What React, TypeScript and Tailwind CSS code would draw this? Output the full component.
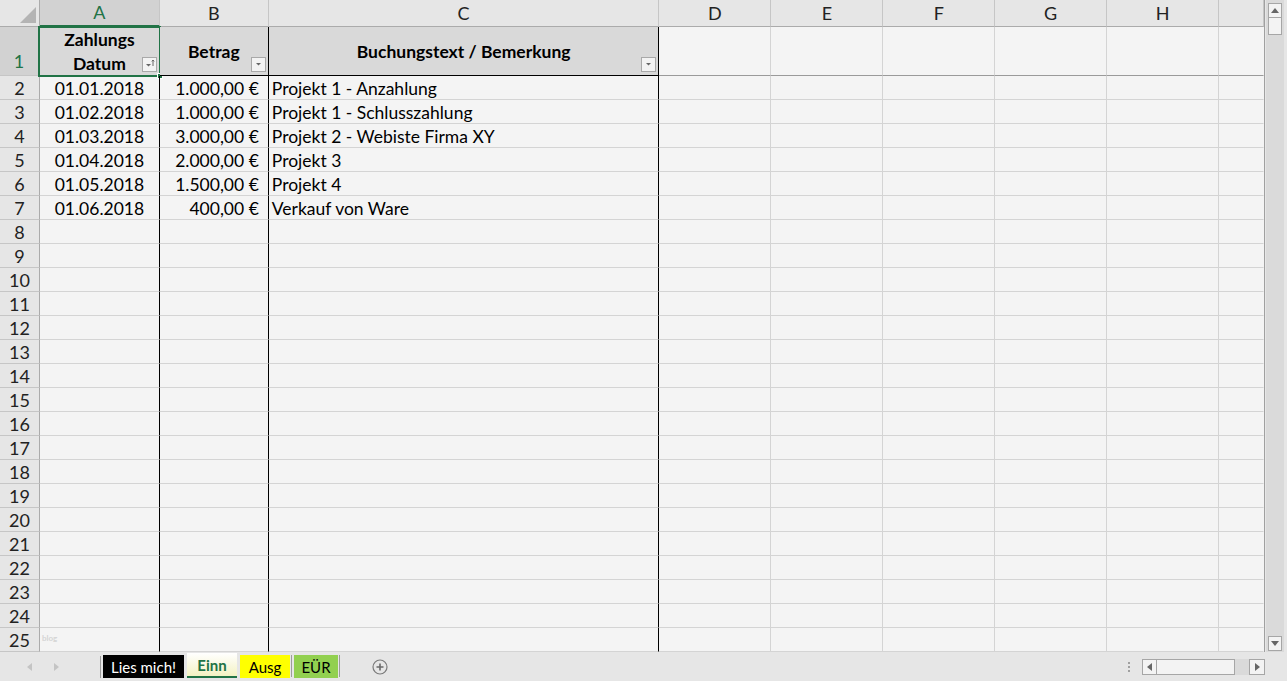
import React from "react";

const cols = [
  { key: "A", w: "w-[120px]", edge: "border-r-black" },
  { key: "B", w: "w-[109px]", edge: "border-r-black" },
  { key: "C", w: "w-[391px]", edge: "border-r-black" },
  { key: "D", w: "w-[112px]", edge: "border-r-[#d4d4d4]" },
  { key: "E", w: "w-[112px]", edge: "border-r-[#d4d4d4]" },
  { key: "F", w: "w-[112px]", edge: "border-r-[#d4d4d4]" },
  { key: "G", w: "w-[112px]", edge: "border-r-[#d4d4d4]" },
  { key: "H", w: "w-[112px]", edge: "border-r-[#d4d4d4]" },
  { key: "", w: "w-[45px]", edge: "border-r-transparent" },
];

const rows = [
  ["01.01.2018", "1.000,00 €", "Projekt 1 - Anzahlung"],
  ["01.02.2018", "1.000,00 €", "Projekt 1 - Schlusszahlung"],
  ["01.03.2018", "3.000,00 €", "Projekt 2 - Webiste Firma XY"],
  ["01.04.2018", "2.000,00 €", "Projekt 3"],
  ["01.05.2018", "1.500,00 €", "Projekt 4"],
  ["01.06.2018", "400,00 €", "Verkauf von Ware"],
];

function FilterButton({ sorted }: { sorted?: boolean }) {
  return (
    <div className="absolute right-[2px] bottom-[3px] w-[15px] h-[15px] bg-[#f3f3f3] border border-[#a9a9a9] flex items-end justify-center pb-[3px]">
      <svg width="13" height="9" viewBox="0 0 13 9">
        {sorted ? (
          <>
            <path d="M3 5h5l-2.5 2.5z" fill="#666" />
            <path d="M10 1v6M8.8 2.4L10 1l1.2 1.4" stroke="#666" strokeWidth="1" fill="none" />
          </>
        ) : (
          <path d="M4 4h5l-2.5 2.5z" fill="#666" />
        )}
      </svg>
    </div>
  );
}

function ColumnHeader() {
  return (
    <div className="flex h-[27px] bg-[#e6e6e6]">
      <div className="w-[40px] h-full border-r border-b border-[#ababab] relative">
        <svg className="absolute right-[3px] bottom-[3px]" width="16" height="16" viewBox="0 0 16 16">
          <path d="M16 0V16H0z" fill="#b4b4b4" />
        </svg>
      </div>
      {cols.map((c) => (
        <div
          key={c.key || "x"}
          className={`${c.w} h-full flex items-center justify-center text-[18px] border-b border-r ${
            c.key === "A"
              ? "bg-[#d2d2d2] text-[#217346] border-r-[#c6c6c6] border-b-[#217346] border-b-2"
              : "text-[#222] border-r-[#c6c6c6] border-b-[#ababab]"
          }`}
        >
          {c.key}
        </div>
      ))}
    </div>
  );
}

function HeaderRow() {
  return (
    <div className="flex h-[49px]">
      <div className="w-[40px] h-full bg-[#d2d2d2] border-r-2 border-r-[#217346] border-b border-b-[#c6c6c6] flex items-end justify-center text-[18px] text-[#217346]">
        1
      </div>
      <div className="w-[120px] h-full bg-[#d9d9d9] border-r border-r-black border-b border-b-black relative flex flex-col items-center justify-center pt-[2px] font-bold text-[17.5px] leading-[24px]">
        <span>Zahlungs</span>
        <span>Datum</span>
        <FilterButton sorted />
        <div className="absolute -left-[2px] -top-[1px] -right-[2px] -bottom-[2px] border-2 border-[#217346]" />
        <div className="absolute -right-[4px] -bottom-[4px] w-[6px] h-[6px] bg-[#217346] border border-white" />
      </div>
      <div className="w-[109px] h-full bg-[#d9d9d9] border-r border-r-black border-b border-b-black relative flex items-center justify-center pt-[3px] font-bold text-[17.5px]">
        Betrag
        <FilterButton />
      </div>
      <div className="w-[391px] h-full bg-[#d9d9d9] border-r border-r-black border-b border-b-black relative flex items-center justify-center pt-[3px] font-bold text-[17.5px]">
        Buchungstext / Bemerkung
        <FilterButton />
      </div>
      {cols.slice(3).map((c) => (
        <div key={c.key || "x"} className={`${c.w} h-full border-r ${c.edge} border-b border-b-[#9a9a9a]`} />
      ))}
    </div>
  );
}

function DataRow({ n, data }: { n: number; data?: string[] }) {
  return (
    <div className="flex h-[24px]">
      <div className="w-[40px] h-full bg-[#e6e6e6] border-r border-r-[#ababab] border-b border-b-[#c6c6c6] flex items-center justify-center pt-[1px] text-[18px] text-[#222]">
        {n}
      </div>
      {cols.map((c, i) => (
        <div
          key={c.key || "x"}
          className={`${c.w} h-full border-r ${c.edge} border-b border-b-[#d4d4d4] flex items-center pt-[3px] text-[17.5px] text-black whitespace-nowrap relative ${
            i === 0 ? "justify-center" : i === 1 ? "justify-end pr-[9px]" : "pl-[3px]"
          }`}
        >
          {data ? data[i] : null}
          {n === 25 && i === 0 ? (
            <span className="absolute left-[2px] top-[4px] text-[8px] font-bold text-[#d4d4d4]">blog</span>
          ) : null}
        </div>
      ))}
    </div>
  );
}

function VScrollbar() {
  return (
    <div className="w-[22px] bg-[#e6e6e6] flex">
      <div className="w-[18px] ml-[1px] bg-[#dadada] flex flex-col pt-[3px] px-[2px]">
        <div className="h-[15px] bg-[#f3f3f3] border border-[#a6a6a6] flex items-center justify-center">
          <svg width="8" height="5" viewBox="0 0 8 5">
            <path d="M0 5L4 0L8 5z" fill="#666" />
          </svg>
        </div>
        <div className="h-[17px] bg-[#f3f3f3] border border-t-0 border-[#a6a6a6]" />
        <div className="flex-1" />
        <div className="h-[15px] mb-[1px] bg-[#f3f3f3] border border-[#a6a6a6] flex items-center justify-center">
          <svg width="8" height="5" viewBox="0 0 8 5">
            <path d="M0 0L4 5L8 0z" fill="#666" />
          </svg>
        </div>
      </div>
    </div>
  );
}

function Tab({ label, cls }: { label: string; cls: string }) {
  return <div className={`h-[23px] flex items-center justify-center pt-[1px] text-[15px] ${cls}`}>{label}</div>;
}

function BottomBar() {
  return (
    <div className="h-[29px] bg-[#e6e6e6] flex items-start">
      <div className="w-[100px] h-full flex items-center pl-[26px] gap-[22px]">
        <svg width="6" height="8" viewBox="0 0 6 8">
          <path d="M6 0V8L1 4z" fill="#c4c4c4" />
        </svg>
        <svg width="6" height="8" viewBox="0 0 6 8">
          <path d="M0 0V8L5 4z" fill="#c4c4c4" />
        </svg>
      </div>
      <div className="w-[1px] h-[22px] mt-[4px] bg-[#9c9c9c]" />
      <div className="flex items-start ml-[2px] pt-[3px]">
        <Tab label="Lies mich!" cls="w-[81px] bg-black text-white" />
        <div className="w-[50px] h-[25px] -mt-[2px] ml-[3px] flex items-center justify-center pt-[1px] text-[15px] font-bold text-[#217346] bg-gradient-to-b from-white to-[#f4f2c2] border-b-2 border-b-[#217346]">
          Einn
        </div>
        <Tab label="Ausg" cls="w-[50px] ml-[3px] bg-[#ffff00] text-black" />
        <div className="w-[1px] h-[22px] ml-[1px] bg-[#9c9c9c]" />
        <Tab label="EÜR" cls="w-[44px] ml-[2px] bg-[#92d050] text-black" />
        <div className="w-[1px] h-[22px] ml-[1px] bg-[#9c9c9c]" />
      </div>
      <div className="ml-[32px] h-full flex items-center">
        <svg width="16" height="16" viewBox="0 0 16 16">
          <circle cx="8" cy="8" r="7" fill="none" stroke="#7a7a7a" strokeWidth="1.2" />
          <path d="M8 4.5v7M4.5 8h7" stroke="#6a6a6a" strokeWidth="1.6" />
        </svg>
      </div>
      <div className="flex-1" />
      <div className="h-full flex items-center mr-[12px]">
        <div className="flex flex-col gap-[2px]">
          <div className="w-[2px] h-[2px] bg-[#a0a0a0]" />
          <div className="w-[2px] h-[2px] bg-[#a0a0a0]" />
          <div className="w-[2px] h-[2px] bg-[#a0a0a0]" />
        </div>
      </div>
      <div className="h-full flex items-center mr-[22px]">
        <div className="flex h-[16px] w-[123px] bg-[#dadada]">
          <div className="w-[15px] h-full bg-[#f3f3f3] border border-[#a6a6a6] flex items-center justify-center">
            <svg width="5" height="8" viewBox="0 0 5 8">
              <path d="M5 0V8L0 4z" fill="#666" />
            </svg>
          </div>
          <div className="w-[78px] h-full bg-[#f3f3f3] border border-l-0 border-[#a6a6a6]" />
          <div className="flex-1" />
          <div className="w-[16px] h-full bg-[#f3f3f3] border border-[#a6a6a6] flex items-center justify-center">
            <svg width="5" height="8" viewBox="0 0 5 8">
              <path d="M0 0V8L5 4z" fill="#666" />
            </svg>
          </div>
        </div>
      </div>
    </div>
  );
}

export default function App() {
  return (
    <div className="w-[1287px] h-[681px] bg-[#e6e6e6] flex flex-col overflow-hidden font-['Lato',_'Noto_Sans',_sans-serif]">
      <div className="flex flex-1 min-h-0">
        <div className="w-[1265px] flex flex-col bg-[#f4f4f4] border-r border-r-[#a0a0a0]">
          <ColumnHeader />
          <HeaderRow />
          {Array.from({ length: 24 }, (_, i) => (
            <DataRow key={i} n={i + 2} data={rows[i]} />
          ))}
        </div>
        <VScrollbar />
      </div>
      <BottomBar />
    </div>
  );
}
